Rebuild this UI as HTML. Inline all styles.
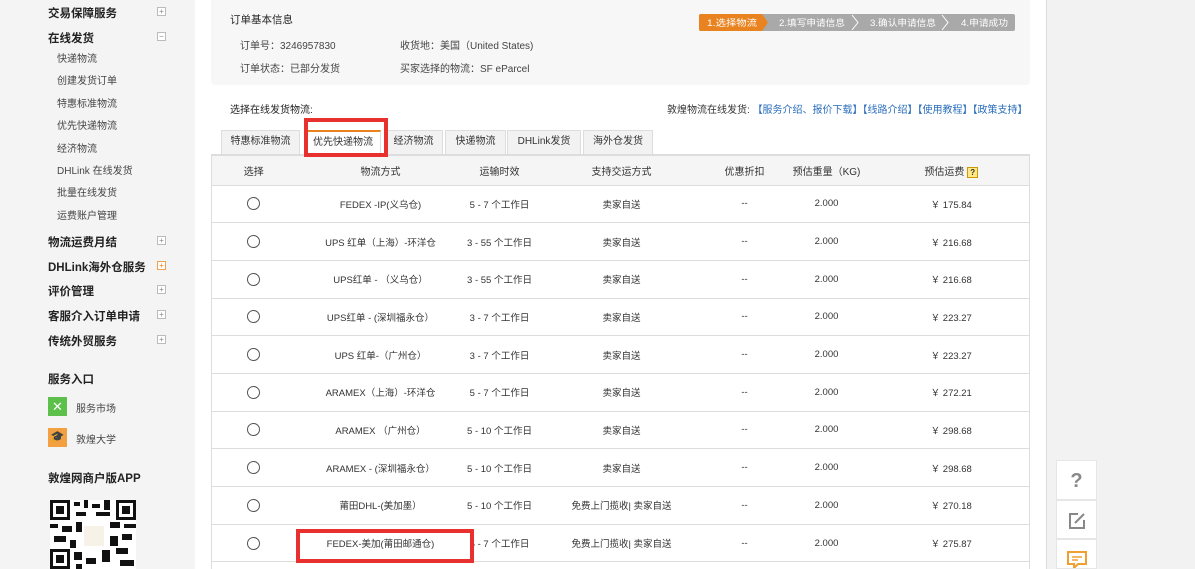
<!DOCTYPE html>
<html><head><meta charset="utf-8"><style>
*{margin:0;padding:0;box-sizing:border-box}
html,body{width:1195px;height:569px;overflow:hidden}
body{background:#f2f2f2;font-family:"Liberation Sans","Noto Sans CJK SC",sans-serif;font-size:10px;color:#333;position:relative}
.a{position:absolute;white-space:nowrap}
.side{position:absolute;left:0;top:0;width:195px;height:569px;background:#f4f4f4}
.h{font-weight:bold;font-size:11.5px;color:#222;left:48px}
.s{left:57px;color:#444;font-size:10px}
.pm{position:absolute;left:157px;width:9px;height:9px;border:1px solid #bbb;font-size:8px;line-height:7px;text-align:center;color:#888;background:#fff}
.main{position:absolute;left:195px;top:0;width:852px;height:569px;background:#fff;border-right:1px solid #ddd}
.info{position:absolute;left:211px;top:0;width:819px;height:85px;background:#f7f7f7;border-radius:0 0 4px 4px}
.tab{position:absolute;top:130px;height:24px;background:#f2f2f2;border:1px solid #ddd;border-bottom:none;text-align:center;line-height:22px;font-size:10px;color:#333}
table{position:absolute;left:211px;top:154px;width:819px;border-collapse:collapse;border-left:1px solid #ddd;border-right:1px solid #ddd}
th{background:#f5f5f5;height:30px;font-weight:normal;font-size:10px;color:#333;border-top:2px solid #ddd;border-bottom:1px solid #ddd}
td{height:37.7px;text-align:center;font-size:9.5px;color:#333;border-bottom:1px solid #ddd;vertical-align:middle}
.r{display:inline-block;width:13px;height:13px;border:1px solid #555;border-radius:50%;vertical-align:middle}
.red{position:absolute;border:4px solid #e8302f}
.fl{position:absolute;left:1056px;width:41px;background:#fff;border:1px solid #e6e6e6;text-align:center}
</style></head><body>
<div class="side">
<div class="a h" style="top:5px">交易保障服务</div><div class="pm" style="top:7px">+</div>
<div class="a h" style="top:30px">在线发货</div><div class="pm" style="top:32px">−</div>
<div class="a s" style="top:50px">快递物流</div>
<div class="a s" style="top:72px">创建发货订单</div>
<div class="a s" style="top:95px">特惠标准物流</div>
<div class="a s" style="top:117px">优先快递物流</div>
<div class="a s" style="top:140px">经济物流</div>
<div class="a s" style="top:162px">DHLink 在线发货</div>
<div class="a s" style="top:184px">批量在线发货</div>
<div class="a s" style="top:207px">运费账户管理</div>
<div class="a h" style="top:234px">物流运费月结</div><div class="pm" style="top:236px">+</div>
<div class="a h" style="top:259px">DHLink海外仓服务</div><div class="pm" style="top:261px;border-color:#f0a050;color:#f08020">+</div>
<div class="a h" style="top:283px">评价管理</div><div class="pm" style="top:285px">+</div>
<div class="a h" style="top:308px">客服介入订单申请</div><div class="pm" style="top:310px">+</div>
<div class="a h" style="top:333px">传统外贸服务</div><div class="pm" style="top:335px">+</div>
<div class="a h" style="top:371px">服务入口</div>
<div class="a" style="left:48px;top:397px;width:19px;height:19px;background:#5cc04a;color:#fff;font-size:13px;line-height:19px;text-align:center">✕</div>
<div class="a s" style="left:76px;top:400px">服务市场</div>
<div class="a" style="left:48px;top:428px;width:19px;height:19px;background:#f3a040;color:#fff;font-size:11px;line-height:19px;text-align:center">🎓</div>
<div class="a s" style="left:76px;top:431px">敦煌大学</div>
<div class="a h" style="top:470px">敦煌网商户版APP</div>
<svg class="a" style="left:50px;top:500px" width="86" height="69" viewBox="0 0 86 69">
<rect width="86" height="69" fill="#fff"/>
<g fill="#111"><rect x="0" y="0" width="20" height="20"/><rect x="66" y="0" width="20" height="20"/><rect x="0" y="49" width="20" height="20"/></g>
<g fill="#fff"><rect x="3" y="3" width="14" height="14"/><rect x="69" y="3" width="14" height="14"/><rect x="3" y="52" width="14" height="14"/></g>
<g fill="#111"><rect x="6" y="6" width="8" height="8"/><rect x="72" y="6" width="8" height="8"/><rect x="6" y="55" width="8" height="8"/>
<rect x="24" y="2" width="6" height="4"/><rect x="34" y="0" width="4" height="8"/><rect x="42" y="4" width="8" height="4"/><rect x="54" y="0" width="6" height="10"/><rect x="26" y="12" width="10" height="4"/><rect x="46" y="12" width="14" height="4"/><rect x="0" y="24" width="8" height="4"/><rect x="12" y="26" width="10" height="6"/><rect x="26" y="22" width="6" height="10"/><rect x="60" y="22" width="10" height="6"/><rect x="74" y="24" width="12" height="4"/><rect x="4" y="36" width="12" height="6"/><rect x="20" y="40" width="6" height="8"/><rect x="60" y="36" width="8" height="10"/><rect x="72" y="34" width="10" height="6"/><rect x="24" y="52" width="8" height="8"/><rect x="36" y="58" width="10" height="6"/><rect x="52" y="50" width="8" height="12"/><rect x="66" y="48" width="12" height="6"/><rect x="70" y="60" width="14" height="6"/><rect x="26" y="64" width="6" height="5"/></g>
<rect x="34" y="26" width="20" height="20" fill="#f6f2e8"/></svg>
</div>
<div class="main"></div>
<div class="info"></div>
<div class="a" style="left:230px;top:12px;font-size:10.5px;color:#222">订单基本信息</div>
<div class="a" style="left:240px;top:37px;color:#444">订单号：3246957830</div>
<div class="a" style="left:400px;top:37px;color:#444">收货地：美国（United States)</div>
<div class="a" style="left:240px;top:60px;color:#444">订单状态：已部分发货</div>
<div class="a" style="left:400px;top:60px;color:#444">买家选择的物流：SF eParcel</div>
<svg class="a" style="left:699px;top:14px" width="316" height="17" viewBox="0 0 316 17">
<rect x="0" y="0" width="316" height="17" rx="2" fill="#a9a9a9"/>
<path d="M2 0H63L69 8.5L63 17H2Q0 17 0 15V2Q0 0 2 0Z" fill="#e98320"/>
<path d="M153 1L159 8.5L153 16M243 1L249 8.5L243 16" stroke="#fff" fill="none" stroke-width="1"/>
<g fill="#fff" font-size="9" font-family="Liberation Sans,Noto Sans CJK SC,sans-serif"><text x="8" y="12" textLength="50" lengthAdjust="spacingAndGlyphs">1.选择物流</text><text x="80" y="12" textLength="66" lengthAdjust="spacingAndGlyphs">2.填写申请信息</text><text x="171" y="12" textLength="66" lengthAdjust="spacingAndGlyphs">3.确认申请信息</text><text x="262" y="12" textLength="47" lengthAdjust="spacingAndGlyphs">4.申请成功</text></g></svg>
<div class="a" style="left:230px;top:101px;color:#222">选择在线发货物流:</div>
<div class="a" style="left:667px;top:101px;color:#333">敦煌物流在线发货: <span style="color:#2a6ebb">【服务介绍、报价下载】【线路介绍】【使用教程】【政策支持】</span></div>
<div class="tab" style="left:221px;width:79px">特惠标准物流</div>
<div class="tab" style="left:305px;width:76px;background:#fff;border-top:2px solid #e98320;height:25px;z-index:2">优先快递物流</div>
<div class="tab" style="left:384px;width:59px">经济物流</div>
<div class="tab" style="left:445px;width:61px">快递物流</div>
<div class="tab" style="left:507px;width:74px">DHLink发货</div>
<div class="tab" style="left:583px;width:70px">海外仓发货</div>
<div class="a" style="left:211px;top:540px;width:819px;height:29px;border-left:1px solid #ddd;border-right:1px solid #ddd"></div>
<table>
<tr><th style="width:84px">选择</th><th style="width:170px">物流方式</th><th style="width:68px">运输时效</th><th style="width:176px">支持交运方式</th><th style="width:70px">优惠折扣</th><th style="width:94px">预估重量（KG)</th><th>预估运费 <span style="display:inline-block;border:1px solid #c90;background:#ffe88a;font-size:8px;line-height:9px;width:11px;font-weight:bold">?</span></th></tr>
<tr><td><span class="r"></span></td><td>FEDEX -IP(义乌仓)</td><td>5 - 7 个工作日</td><td>卖家自送</td><td>--</td><td>2.000</td><td>￥ 175.84</td></tr>
<tr><td><span class="r"></span></td><td>UPS 红单（上海）-环洋仓</td><td>3 - 55 个工作日</td><td>卖家自送</td><td>--</td><td>2.000</td><td>￥ 216.68</td></tr>
<tr><td><span class="r"></span></td><td>UPS红单 - （义乌仓）</td><td>3 - 55 个工作日</td><td>卖家自送</td><td>--</td><td>2.000</td><td>￥ 216.68</td></tr>
<tr><td><span class="r"></span></td><td>UPS红单 - (深圳福永仓）</td><td>3 - 7 个工作日</td><td>卖家自送</td><td>--</td><td>2.000</td><td>￥ 223.27</td></tr>
<tr><td><span class="r"></span></td><td>UPS 红单-（广州仓）</td><td>3 - 7 个工作日</td><td>卖家自送</td><td>--</td><td>2.000</td><td>￥ 223.27</td></tr>
<tr><td><span class="r"></span></td><td>ARAMEX（上海）-环洋仓</td><td>5 - 7 个工作日</td><td>卖家自送</td><td>--</td><td>2.000</td><td>￥ 272.21</td></tr>
<tr><td><span class="r"></span></td><td>ARAMEX （广州仓）</td><td>5 - 10 个工作日</td><td>卖家自送</td><td>--</td><td>2.000</td><td>￥ 298.68</td></tr>
<tr><td><span class="r"></span></td><td>ARAMEX - (深圳福永仓）</td><td>5 - 10 个工作日</td><td>卖家自送</td><td>--</td><td>2.000</td><td>￥ 298.68</td></tr>
<tr><td><span class="r"></span></td><td>莆田DHL-(美加墨）</td><td>5 - 10 个工作日</td><td>免费上门揽收| 卖家自送</td><td>--</td><td>2.000</td><td>￥ 270.18</td></tr>
<tr><td><span class="r"></span></td><td>FEDEX-美加(莆田邮通仓)</td><td>5 - 7 个工作日</td><td>免费上门揽收| 卖家自送</td><td>--</td><td>2.000</td><td>￥ 275.87</td></tr>
</table>
<div class="red" style="left:304px;top:118px;width:84px;height:39px;z-index:3"></div>
<div class="red" style="left:296px;top:529px;width:178px;height:34px;z-index:3"></div>
<div class="fl" style="top:460px;height:40px;font-size:20px;line-height:40px;color:#888;font-weight:bold">?</div>
<div class="fl" style="top:500px;height:39px"><svg width="20" height="20" viewBox="0 0 20 20" style="margin-top:10px"><path d="M11 3H3V17H17V9" stroke="#888" stroke-width="2" fill="none"/><path d="M8 12L17 3" stroke="#888" stroke-width="2"/></svg></div>
<div class="fl" style="top:539px;height:30px;overflow:hidden"><svg width="22" height="19" viewBox="0 0 22 19" style="margin-top:10px;display:inline-block"><path d="M2 2H20V14H12L8 18V14H2Z" stroke="#f0a030" stroke-width="2" fill="none"/><path d="M6 7H16M6 10H12" stroke="#f0a030" stroke-width="1.6"/></svg></div>
</body></html>
